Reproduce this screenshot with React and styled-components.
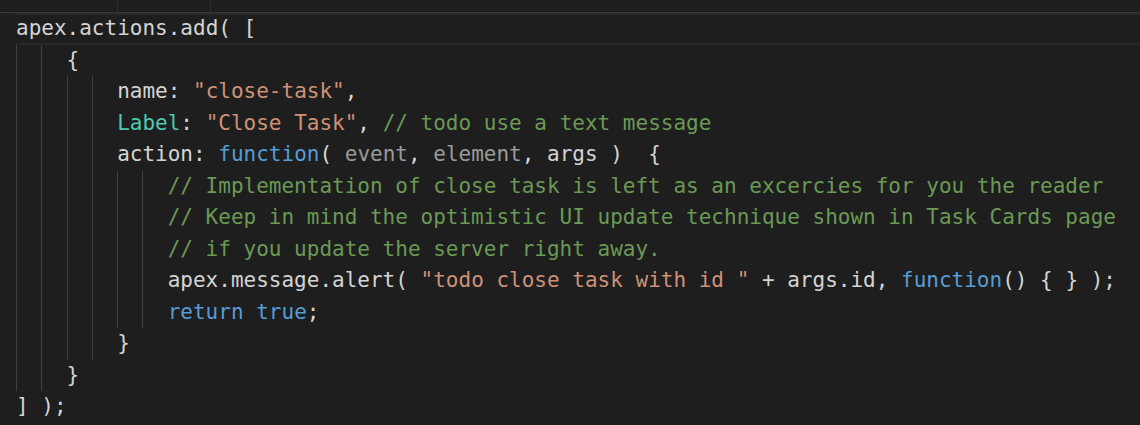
import React from "react";
import styled, { createGlobalStyle } from "styled-components";

const Global = createGlobalStyle`
  html, body { margin: 0; padding: 0; background: #1e1e1e; }
  body { width: 1140px; height: 425px; overflow: hidden; }
`;

const Editor = styled.div`
  width: 1140px;
  height: 425px;
  background: #1e1e1e;
  display: flex;
  flex-direction: column;
  font-family: "DejaVu Sans Mono", "Liberation Mono", monospace;
  font-size: 21px;
  color: #d4d4d4;
`;

const TopStrip = styled.div`
  height: 12px;
  border-bottom: 1px solid #3a3a3a;
  display: flex;
  padding-left: 117px;
  gap: 92px;
`;

const Divider = styled.div`
  width: 1px;
  height: 100%;
  background: #2e2e2e;
`;

const Code = styled.div`
  margin-left: 15px;
  display: flex;
  flex-direction: column;
`;

const Row = styled.div`
  height: 31.5px;
  box-sizing: border-box;
  display: flex;
  align-items: center;
  padding-left: 1px;
  white-space: pre;
  line-height: 31.5px;
  ${(p) => p.$current && `border-top: 2px solid #282828; border-bottom: 2px solid #282828;`}
`;

const Guide = styled.span`
  width: 2ch;
  height: 100%;
  flex: none;
  box-sizing: border-box;
  border-left: 1px solid #404040;
`;

const Tok = styled.span`
  color: ${(p) =>
    ({
      str: "#ce9178",
      kw: "#569cd6",
      com: "#6a9955",
      type: "#4ec9b0",
      dim: "#9a9a9a",
      plain: "#d4d4d4",
    }[p.$k || "plain"])};
`;

const lines = [
  { g: 0, cur: true, t: [["apex.actions.add( ["]] },
  { g: 2, t: [["{"]] },
  { g: 4, t: [["name: "], ['"close-task"', "str"], [","]] },
  { g: 4, t: [["Label", "type"], [": "], ['"Close Task"', "str"], [", "], ["// todo use a text message", "com"]] },
  {
    g: 4,
    t: [["action: "], ["function", "kw"], ["( "], ["event", "dim"], [", "], ["element", "dim"], [", args )  {"]],
  },
  { g: 6, t: [["// Implementation of close task is left as an excercies for you the reader", "com"]] },
  { g: 6, t: [["// Keep in mind the optimistic UI update technique shown in Task Cards page", "com"]] },
  { g: 6, t: [["// if you update the server right away.", "com"]] },
  {
    g: 6,
    t: [["apex.message.alert( "], ['"todo close task with id "', "str"], [" + args.id, "], ["function", "kw"], ["() { } );"]],
  },
  { g: 6, t: [["return", "kw"], [" "], ["true", "kw"], [";"]] },
  { g: 4, t: [["}"]] },
  { g: 2, t: [["}"]] },
  { g: 0, t: [["] );"]] },
];

export default function App() {
  return (
    <>
      <Global />
      <Editor>
        <TopStrip>
          <Divider />
          <Divider />
        </TopStrip>
        <Code>
          {lines.map((l, i) => (
            <Row key={i} $current={l.cur}>
              {Array.from({ length: l.g }).map((_, j) => (
                <Guide key={j} />
              ))}
              {l.t.map(([text, k], j) => (
                <Tok key={j} $k={k}>
                  {text}
                </Tok>
              ))}
            </Row>
          ))}
        </Code>
      </Editor>
    </>
  );
}
